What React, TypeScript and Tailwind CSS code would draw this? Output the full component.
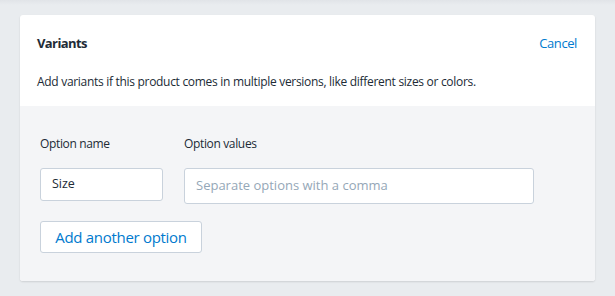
import React from "react";

export default function App() {
  const font = { fontFamily: '"Open Sans", "Noto Sans", sans-serif' };
  return (
    <div className="w-[615px] h-[296px] bg-[#e9ecef] relative overflow-hidden" style={font}>
      <div className="h-[5px] bg-gradient-to-b from-[#e1e4e8] to-[#e9ecef]" />
      <div className="mx-[20px] mt-[10px] w-[575px] rounded-[3px] bg-white shadow-[0_1px_2px_rgba(0,0,0,0.12)] overflow-hidden">
        <div className="px-[17px] pt-[20px] pb-[15px]">
          <div className="flex items-center justify-between h-[18px]">
            <span className="text-[13px] font-bold text-[#212b36] tracking-[-0.6px]">Variants</span>
            <span className="text-[13px] text-[#007ace] tracking-[-0.4px] mr-[1px]">Cancel</span>
          </div>
          <p className="mt-[20px] text-[12px] leading-[18px] text-[#212b36] tracking-[-0.3px]">
            Add variants if this product comes in multiple versions, like different sizes or colors.
          </p>
        </div>
        <div className="bg-[#f4f5f7] px-[20px] pt-[30px] pb-[28px]">
          <div className="flex gap-[21px]">
            <div className="flex flex-col">
              <span className="text-[12px] leading-[16px] text-[#212b36] tracking-[-0.35px]">Option name</span>
              <div className="mt-[16px] w-[123px] h-[33px] rounded-[3px] border border-[#c9d2dc] bg-white flex items-center px-[11px]">
                <span className="text-[12.5px] text-[#212b36]">Size</span>
              </div>
            </div>
            <div className="flex flex-col">
              <span className="text-[12px] leading-[16px] text-[#212b36] tracking-[-0.35px]">Option values</span>
              <div className="mt-[16px] w-[350px] h-[36px] rounded-[3px] border border-[#c9d2dc] bg-white flex items-center px-[11px]">
                <span className="text-[13px] text-[#95a7b7]">Separate options with a comma</span>
              </div>
            </div>
          </div>
          <button className="mt-[17px] w-[162px] h-[32px] rounded-[3px] border border-[#c9d2dc] bg-white text-[15px] text-[#007ace] tracking-[-0.3px] flex items-center justify-center">
            Add another option
          </button>
        </div>
      </div>
    </div>
  );
}
